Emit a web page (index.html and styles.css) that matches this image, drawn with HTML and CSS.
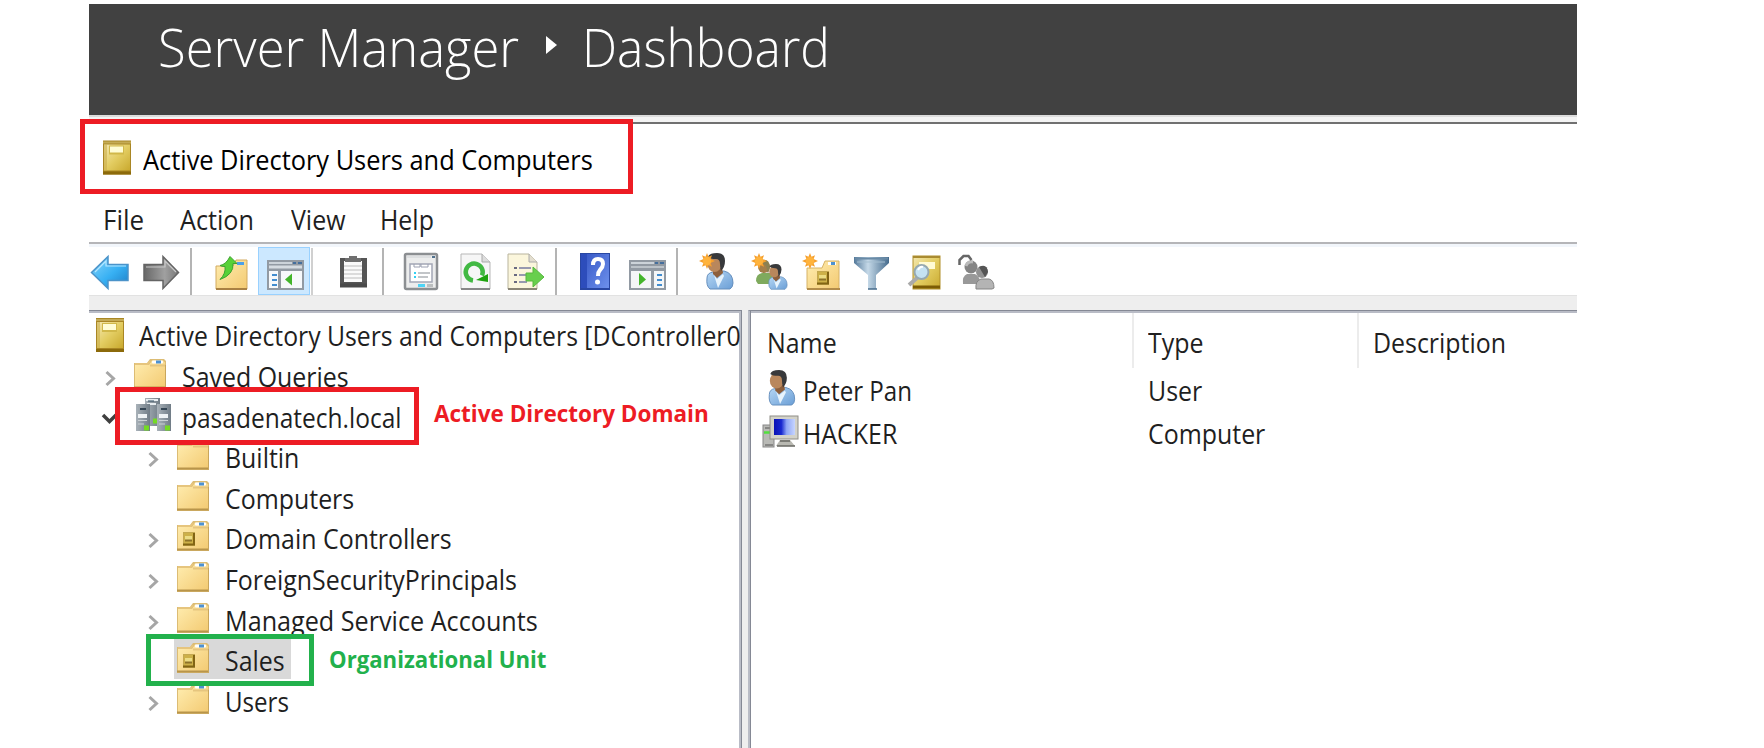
FILE: index.html
```html
<!DOCTYPE html>
<html lang="en">
<head>
<meta charset="utf-8">
<title>Active Directory Users and Computers</title>
<link rel="stylesheet" href="styles.css">
</head>
<body>
<svg class="defs" aria-hidden="true">
  <defs>
    <linearGradient id="gold" x1="0" y1="0" x2="1" y2="1"><stop offset="0" stop-color="#f3e7b0"/><stop offset=".5" stop-color="#e3cd62"/><stop offset="1" stop-color="#c9a92e"/></linearGradient>
    <linearGradient id="fold" x1="0" y1="0" x2="1" y2="1"><stop offset="0" stop-color="#ffedb0"/><stop offset="1" stop-color="#f3ca72"/></linearGradient>
    <linearGradient id="blue" x1="0" y1="0" x2="1" y2="1"><stop offset="0" stop-color="#8ad6fb"/><stop offset=".55" stop-color="#37b0f3"/><stop offset="1" stop-color="#1b7cc4"/></linearGradient>
    <linearGradient id="gray" x1="0" y1="0" x2="1" y2="0"><stop offset="0" stop-color="#676767"/><stop offset=".6" stop-color="#a0a0a0"/><stop offset="1" stop-color="#777"/></linearGradient>
    <linearGradient id="help" x1="0" y1="0" x2="1" y2="1"><stop offset="0" stop-color="#3a5bc8"/><stop offset="1" stop-color="#6d90ec"/></linearGradient>
    <linearGradient id="funnel" x1="0" y1="0" x2="1" y2="0"><stop offset="0" stop-color="#54799a"/><stop offset=".4" stop-color="#c5d9e8"/><stop offset="1" stop-color="#456b8d"/></linearGradient>
    <linearGradient id="screen" x1="0" y1="0" x2="1" y2="0"><stop offset="0" stop-color="#0a12b4"/><stop offset=".35" stop-color="#1828d0"/><stop offset=".6" stop-color="#8fa6f6"/><stop offset="1" stop-color="#c7d5ff"/></linearGradient>
    <linearGradient id="tower" x1="0" y1="0" x2="1" y2="0"><stop offset="0" stop-color="#a9b2b9"/><stop offset="1" stop-color="#707c86"/></linearGradient>
    <linearGradient id="shirt" x1="0" y1="0" x2="1" y2="1"><stop offset="0" stop-color="#b7d8f5"/><stop offset="1" stop-color="#6a9ed6"/></linearGradient>
    <symbol id="book" viewBox="0 0 28 34">
      <rect width="28" height="34" fill="#a98624"/><rect y="1" width="28" height="2" fill="#c4ab55"/>
      <rect x="1" y="4" width="26" height="26" fill="url(#gold)"/><rect x="1" y="4" width="3" height="26" fill="#c9ae4c" opacity=".6"/>
      <rect x="6" y="5" width="15" height="9" fill="#d1b849"/><rect x="7" y="6" width="13" height="6" fill="#fffdd5"/><rect y="31" width="28" height="3" fill="#8c6a0b"/>
    </symbol>
    <symbol id="folder" viewBox="0 0 33 30">
      <path d="M0 4h13l3-4h14l2 2v28H0z" fill="#dcbc74"/><path d="M1 6h14l3-4.500h11l2 2V29H1z" fill="url(#fold)"/>
      <path d="M1 5h13l2-3M16 6.500h15" stroke="#e6c57e" stroke-width="2" fill="none"/>
      <rect x="18" y="1.500" width="11" height="3" rx="1" fill="#fff"/><rect x="22" y="1.500" width="5" height="3" fill="#4d91d2"/>
      <path d="M0 28.500h32" stroke="#b8954b" stroke-width="2"/><path d="M31.500 6v23" stroke="#c9a65b"/>
    </symbol>
    <symbol id="chip" viewBox="0 0 12 14">
      <rect width="12" height="14" fill="#c4a850"/><rect x="1" y="1" width="9" height="11" fill="#cdb048"/><rect x="2" y="4" width="7" height="4" fill="#ecdc84"/><path d="M0 12.500h12M11 1v12" stroke="#826414" stroke-width="2"/><path d="M2 8.500h7" stroke="#8d7229" stroke-width="2"/>
    </symbol>
    <symbol id="spark" viewBox="0 0 16 16">
      <path d="M8 0l1.500 3.800L13 2.200l-1.400 3.900L16 8l-4.400 1.900L13 13.800l-3.500-1.600L8 16l-1.500-3.800L3 13.800l1.400-3.900L0 8l4.400-1.900L3 2.200l3.500 1.600z" fill="#f5a02f"/><circle cx="8" cy="8" r="4.200" fill="#ffb33c"/>
    </symbol>
    <symbol id="person" viewBox="0 0 28 37">
      <path d="M1 25q0-5 6-6l11-1q9 2 9 12 0 4-3 6H4q-4-3-3-11z" fill="url(#shirt)" stroke="#668fbd"/>
      <path d="M7 15h9l1 5-6 5-4-4z" fill="#8d5f3c"/><path d="M8 22l3 4 6-5 1 2-6 12z" fill="#e7f3fc"/>
      <ellipse cx="8.500" cy="11" rx="7" ry="8" fill="#b9875c"/><path d="M2 4q1-4 9-4 8 0 8 8 0 6-4 10-1-3-1-7 0-5-4-5-6 0-8-2z" fill="#38393b"/>
    </symbol>
  </defs>
</svg>

<main class="window">
  <header class="banner">
    <span class="crumb crumb-app">Server Manager</span>
    <svg class="crumb-arrow" viewBox="0 0 11 18"><path d="M0 0l11 9-11 9z" fill="#fff"/></svg>
    <span class="crumb crumb-page">Dashboard</span>
  </header>
  <div class="strip"></div>
  <div class="titlebar">
    <svg width="28" height="35"><use href="#book" width="28" height="35"/></svg>
    <span class="label title-text">Active Directory Users and Computers</span>
  </div>
  <nav class="menu">
    <span class="label m-file">File</span><span class="label m-action">Action</span><span class="label m-view">View</span><span class="label m-help">Help</span>
  </nav>

  <div class="toolbar">
    <svg width="47" height="48" viewBox="89 247 47 48"><path d="M91.500 272.500L108 256.500v8h20v16h-20v8z" fill="url(#blue)" stroke="#4b93c9" stroke-width="1.500"/><path d="M95 272l11-11v5h20" fill="none" stroke="#b3e5ff" stroke-width="1.200"/></svg>
    <svg width="54" height="48" viewBox="136 247 54 48"><path d="M178.500 272.500L163 256.500v8h-19v16h19v8z" fill="url(#gray)" stroke="#646464" stroke-width="1.500"/><path d="M146 267h19v-6l11 11" fill="none" stroke="#c8c8c8" stroke-width="1.200"/></svg>
    <span class="sep"></span>
    <svg width="66" height="48" viewBox="192 247 66 48"><path d="M216 266h17l3-6h11v29h-31z" fill="url(#fold)" stroke="#d3ab61"/><path d="M216 289h31" stroke="#a98143" stroke-width="2"/><rect x="237" y="262" width="7" height="3" fill="#4ba0ea"/><path d="M230 256.500l7 7h-4q1 11-13 16 6-6 5-13-4 0-5-1 6-1 10-9z" fill="#58d137" stroke="#3fa331"/></svg>
    <span class="tool-active"><svg width="52" height="48" viewBox="258 247 52 48"><rect x="267" y="260" width="37" height="30" fill="#929aa3"/><path d="M269 263h23" stroke="#ccd3d9" stroke-width="2"/><path d="M293 263h3M298 263h4" stroke="#456f9d" stroke-width="2"/><path d="M269 267h33" stroke="#d6dce1" stroke-width="3"/><path d="M269 271h9v17h-9zM281 271h21v17h-21z" fill="#f7f9fb"/><path d="M272 275h5M272 280h5M272 285h5" stroke="#438dcf" stroke-width="2"/><path d="M285 279.500l7-6v12z" fill="#43b52b"/></svg></span>
    <span class="gap1"></span><span class="sep sep-light"></span>
    <svg width="69" height="48" viewBox="313 247 69 48"><path d="M340 258h27v29h-27z" fill="#555"/><path d="M344 261h18v21h-18z" fill="#fafafa"/><path d="M344 266h18M344 270h18M344 274h18M344 278h18" stroke="#bcbcbc"/><path d="M345 258h4v-2h8v2h4v4h-16z" fill="#6f6f6f"/><path d="M340 285.500h27" stroke="#4a4a4a" stroke-width="4"/></svg>
    <span class="sep"></span>
    <svg width="65" height="48" viewBox="384 247 65 48"><rect x="405" y="254" width="32" height="35" rx="1.500" fill="#eceded" stroke="#8c8f92" stroke-width="2.500"/><path d="M407 257h24" stroke="#ced1d4"/><path d="M432 257h3" stroke="#51728f" stroke-width="2"/><path d="M410 264h22v18h-22z" fill="#fff" stroke="#a3a7b5" stroke-width="1.500"/><path d="M414 264v3h6v-3M421 264v3h7v-3" fill="none" stroke="#9ba0b1"/><path d="M414 273h2M414 277h2" stroke="#32d0f4" stroke-width="2"/><path d="M418 273h12M418 277h10" stroke="#868b91" stroke-width="1.200"/><path d="M418 285.500h7" stroke="#4ed4f6" stroke-width="3"/><path d="M427 285.500h6" stroke="#bbbebf" stroke-width="3"/></svg>
    <svg width="50" height="48" viewBox="449 247 50 48"><path d="M461 254h21l8 8v27h-29z" fill="#f6f6f6" stroke="#b7b7b7"/><path d="M482 254v8h8" fill="#ddd" stroke="#aaa"/><path d="M461 289h29" stroke="#888" stroke-width="2"/><path d="M473 280.500a8.500 8.500 0 1 1 9-5" fill="none" stroke="#42b943" stroke-width="4.500"/><path d="M476 280l12-6v8z" fill="#1fa30f"/></svg>
    <svg width="56" height="48" viewBox="499 247 56 48"><path d="M508 254h21l8 8v27h-29z" fill="#fbf6dc" stroke="#b9b49d"/><path d="M529 254v8h8" fill="#e3ded0" stroke="#aaa"/><path d="M508 289h29" stroke="#8a8576" stroke-width="2"/><path d="M514 268h3M514 275h3M514 282h3" stroke="#3a3c61" stroke-width="1.500"/><path d="M519 268h12M519 275h8M519 282h8" stroke="#777ba0" stroke-width="1.500"/><path d="M526 273h7v-6l11 10-11 10v-6h-7z" fill="#68cf4d" stroke="#56b83f"/></svg>
    <span class="sep"></span>
    <svg width="63" height="48" viewBox="557 247 63 48"><rect x="580" y="253" width="30" height="37" fill="#2947a3"/><rect x="581" y="254" width="6" height="34" fill="#2d4dbb"/><rect x="587" y="254" width="22" height="34" fill="url(#help)"/><path d="M593 265q0-6 5-6t5 5q0 3-3 6-2 2-2 6" fill="none" stroke="#fff" stroke-width="4"/><circle cx="597.500" cy="282" r="2.500" fill="#fff"/></svg>
    <svg width="56" height="48" viewBox="620 247 56 48"><rect x="629" y="260" width="37" height="30" fill="#929aa3"/><path d="M631 263h23" stroke="#ccd3d9" stroke-width="2"/><path d="M655 263h3M660 263h4" stroke="#456f9d" stroke-width="2"/><path d="M631 267h33" stroke="#bcc3c9" stroke-width="2"/><path d="M631 271h20v17h-20zM654 271h10v17h-10z" fill="#f4f6f7"/><path d="M657 275h5M657 280h5M657 285h5" stroke="#438dcf" stroke-width="2"/><path d="M639 273l7 6.500-7 6z" fill="#43b52b"/></svg>
    <span class="sep"></span>
    <svg width="64" height="48" viewBox="678 247 64 48"><use href="#person" x="706" y="253" width="28" height="37"/><use href="#spark" x="699" y="253" width="16" height="16"/></svg>
    <svg width="52" height="48" viewBox="742 247 52 48"><path d="M756 281q0-7 6-8h8q4 2 4 7v4h-16z" fill="#7faa5d"/><circle cx="764" cy="267" r="6" fill="#a47e4a"/><path d="M760 261q9-4 10 6l-2 7-2-8z" fill="#8b8052"/><use href="#person" x="768" y="264" width="20" height="26"/><use href="#spark" x="751" y="253" width="16" height="16"/></svg>
    <svg width="52" height="48" viewBox="794 247 52 48"><path d="M807 268h15l3-7h14v28h-32z" fill="url(#fold)" stroke="#d6b267"/><path d="M807 289h33" stroke="#b28c4a" stroke-width="2"/><rect x="828" y="262" width="8" height="3" fill="#fff"/><rect x="831" y="262" width="4" height="3" fill="#4d91d2"/><use href="#chip" x="817" y="271" width="12" height="14"/><use href="#spark" x="802" y="253" width="16" height="16"/></svg>
    <svg width="52" height="48" viewBox="846 247 52 48"><path d="M854 257h35v6l-13 12v14h-8v-14l-14-12z" fill="url(#funnel)"/><path d="M855 258.500h33" stroke="#698aa6" stroke-width="2"/><path d="M857 262h28" stroke="#a5bfd1"/><path d="M868 289h9" stroke="#466b8b" stroke-width="1.500"/></svg>
    <svg width="52" height="48" viewBox="898 247 52 48"><rect x="913" y="256" width="27" height="33" fill="url(#gold)" stroke="#b2902b"/><rect x="919" y="262" width="16" height="7" fill="#fffbd5"/><path d="M913 257h27" stroke="#a98b31" stroke-width="2"/><path d="M913 287h27" stroke="#7c5c05" stroke-width="3"/><path d="M917 278l-8 7" stroke="#aaa" stroke-width="4"/><circle cx="921.500" cy="272" r="7" fill="#c5e2f2" stroke="#96a8b0" stroke-width="2"/><path d="M918 270q2-4 5-3" stroke="#fff" stroke-width="2" fill="none"/></svg>
    <svg width="52" height="48" viewBox="950 247 52 48"><path d="M963 284q-1-8 4-10h8q5 2 5 10z" fill="#999"/><circle cx="971" cy="267" r="6.500" fill="#848484"/><path d="M966 266q2-5 7-4" stroke="#bbb" stroke-width="3" fill="none"/><path d="M976 289q-1-8 5-10h8q5 1 5 9l-2 1z" fill="#b4b4b4" stroke="#858585"/><circle cx="982" cy="272" r="6" fill="#929292"/><path d="M979 267q8-4 9 5l-3 5z" fill="#555"/><path d="M959.500 265v-5l4-4h5l3 4" fill="none" stroke="#666" stroke-width="2.500"/></svg>
  </div>
  <div class="band"></div>

  <div class="panes">
    <section class="tree">
      <div class="row"><svg width="50" height="40" viewBox="0 0 50 40"><use href="#book" x="7" y="4" width="28" height="34"/></svg><span class="label root-text">Active Directory Users and Computers [DController0</span></div>
      <div class="row"><svg width="41" height="40" viewBox="0 0 41 40"><path d="M17.500 17l7 6.500-7 6.500" class="chev"/></svg><svg width="53" height="40" viewBox="0 0 53 40"><use href="#folder" x="4" y="4" width="33" height="30"/></svg><span class="label">Saved Queries</span></div>
      <div class="row"><svg width="41" height="40" viewBox="0 0 41 40"><path d="M14 19l6.500 6.500L27 19" class="chev open"/></svg><svg width="53" height="40" viewBox="0 0 53 40">
        <rect x="15" y="2" width="15" height="28" fill="url(#tower)"/><path d="M16 4h12M17 8h9" stroke="#e8edf0" stroke-width="2"/><path d="M18 5h6" stroke="#334f62"/>
        <rect x="6" y="8" width="14" height="27" fill="url(#tower)"/><rect x="27" y="8" width="14" height="27" fill="url(#tower)"/><path d="M10 13h6M31 13h6" stroke="#354655" stroke-width="2"/><path d="M8 20h9M29 20h9" stroke="#eef2f4" stroke-width="4"/><path d="M8 24.500h9M29 24.500h9M8 28h6M29 28h6" stroke="#cad0d4"/><path d="M14 32h5M35 32h5M23 25h4" stroke="#74db23" stroke-width="5"/></svg><span class="label domain-text">pasadenatech.local</span></div>
      <div class="row deep"><svg width="41" height="40" viewBox="0 0 41 40"><path d="M17.500 17l7 6.500-7 6.500" class="chev"/></svg><svg width="53" height="40" viewBox="0 0 53 40"><use href="#folder" x="4" y="4" width="33" height="30"/></svg><span class="label">Builtin</span></div>
      <div class="row deep"><span class="nochev"></span><svg width="53" height="40" viewBox="0 0 53 40"><use href="#folder" x="4" y="4" width="33" height="30"/></svg><span class="label">Computers</span></div>
      <div class="row deep"><svg width="41" height="40" viewBox="0 0 41 40"><path d="M17.500 17l7 6.500-7 6.500" class="chev"/></svg><svg width="53" height="40" viewBox="0 0 53 40"><use href="#folder" x="4" y="4" width="33" height="30"/><use href="#chip" x="10" y="15" width="12" height="14"/></svg><span class="label">Domain Controllers</span></div>
      <div class="row deep"><svg width="41" height="40" viewBox="0 0 41 40"><path d="M17.500 17l7 6.500-7 6.500" class="chev"/></svg><svg width="53" height="40" viewBox="0 0 53 40"><use href="#folder" x="4" y="4" width="33" height="30"/></svg><span class="label">ForeignSecurityPrincipals</span></div>
      <div class="row deep"><svg width="41" height="40" viewBox="0 0 41 40"><path d="M17.500 17l7 6.500-7 6.500" class="chev"/></svg><svg width="53" height="40" viewBox="0 0 53 40"><use href="#folder" x="4" y="4" width="33" height="30"/></svg><span class="label accounts-text">Managed Service Accounts</span></div>
      <div class="row deep"><span class="nochev"></span><span class="picked"><svg width="53" height="40" viewBox="0 0 53 40"><use href="#folder" x="4" y="4" width="33" height="30"/><use href="#chip" x="10" y="15" width="12" height="14"/></svg><span class="label">Sales</span></span></div>
      <div class="row deep"><svg width="41" height="40" viewBox="0 0 41 40"><path d="M17.500 17l7 6.500-7 6.500" class="chev"/></svg><svg width="53" height="40" viewBox="0 0 53 40"><use href="#folder" x="4" y="4" width="33" height="30"/></svg><span class="label users-text">Users</span></div>
    </section>
    <div class="splitter"></div>
    <section class="list">
      <div class="cols head"><div class="cell first"><span class="label">Name</span></div><div class="cell"><span class="label">Type</span></div><div class="cell last"><span class="label">Description</span></div></div>
      <div class="cols item"><div class="cell named"><svg width="50" height="43" viewBox="0 0 50 43"><use href="#person" x="17" y="2" width="28" height="36"/></svg><span class="label peter-text">Peter Pan</span></div><div class="cell"><span class="label">User</span></div><div></div></div>
      <div class="cols item"><div class="cell named"><svg width="50" height="43" viewBox="-1 -1 50 43"><rect x="11" y="13" width="11" height="22" fill="#b9bab6" stroke="#888"/><path d="M13 16h6M13 33h8" stroke="#555"/><path d="M12 20.500h7" stroke="#52e13d" stroke-width="2.500"/><rect x="18" y="4" width="28" height="23" fill="#d3d2c9" stroke="#8f8e87"/><rect x="22" y="7" width="21" height="16" fill="url(#screen)"/><path d="M28 28h10l5 6H24z" fill="#b8b8b1"/><path d="M28 29h10M25 34h18" stroke="#686863" stroke-width="1.500"/></svg><span class="label">HACKER</span></div><div class="cell"><span class="label">Computer</span></div><div></div></div>
    </section>
  </div>
</main>

<div class="box box-title"></div>
<div class="box box-domain"></div>
<div class="box box-unit"></div>
<span class="note note-domain">Active Directory Domain</span>
<span class="note note-unit">Organizational Unit</span>
</body>
</html>
```
FILE: styles.css
```css
* { box-sizing: border-box; }
body {
  margin: 0;
  width: 1764px;
  height: 748px;
  overflow: hidden;
  position: relative;
  background: #fff;
  color: #1f1f1f;
  font: 26.5px "Open Sans", "Noto Sans", sans-serif;
}
svg { display: block; flex: none; }
.defs { position: absolute; width: 0; height: 0; }
.window { width: 1488px; height: 748px; margin-left: 89px; padding-top: 4px; overflow: hidden; }

.label { display: inline-block; white-space: nowrap; transform: scaleX(.94); transform-origin: 0 50%; }

.banner { height: 111px; background: #414141; color: #fff; display: flex; align-items: flex-start; padding-left: 69px; }
.crumb { font-size: 54px; font-weight: 300; line-height: 85px; white-space: nowrap; transform: scaleX(.94); transform-origin: 0 50%; }
.crumb-app { width: 388px; }
.crumb-arrow { width: 11px; height: 18px; margin-top: 32px; }
.crumb-page { margin-left: 25px; transform: scaleX(.92); }
.strip { height: 9px; background: #f3f3f3; border-top: 2px solid #dcdcdc; border-bottom: 2px solid #707070; }

.titlebar { height: 70px; display: flex; align-items: flex-start; padding: 16px 0 0 14px; }
.title-text { color: #000; margin-left: 12px; line-height: 40px; transform: scaleX(.957); }

.menu { height: 48px; display: flex; line-height: 52px; padding-left: 14px; }
.m-file { width: 77px; transform: scaleX(.98); }
.m-action { width: 111px; transform: scaleX(.95); }
.m-view { width: 89px; }

.toolbar { height: 53px; border-top: 2px solid #b5b5b8; box-shadow: inset 0 3px #f2f6fb; padding-top: 3px; display: flex; }
.sep { width: 2px; height: 47px; margin-top: 1px; background: #b4b4b4; flex: none; }
.sep-light { background: #d0d0d0; }
.gap1 { width: 1px; flex: none; }
.tool-active { background: #cce8ff; outline: 1px solid #99d1ff; outline-offset: -1px; flex: none; }

.band { height: 15px; background: #eee; border-top: 1px solid #e2e2e2; }
.panes { height: 440px; display: flex; background: #eee; }
.tree {
  width: 653px; flex: none; overflow: hidden; background: #fff; padding-top: 3.400px;
  border-top: 1px solid #858995; border-right: 1px solid #858995;
  box-shadow: inset -2px 2px #b9bcc6;
}
.splitter { width: 6px; flex: none; }
.list { flex: 1; background: #fff; padding-top: 2px; border-top: 1px solid #858995; border-left: 2px solid #b9bcc6; box-shadow: inset 1px 0 #858995, inset 0 2px #b9bcc6; padding-left: 1px; }

.row { height: 40.600px; display: flex; white-space: nowrap; }
.row .label { line-height: 44.600px; margin-left: -1px; }
.row .root-text { margin-left: 0; transform: scaleX(.934); }
.row .domain-text { transform: scaleX(.925); }
.row .accounts-text { transform: scaleX(.95); }
.row .users-text { transform: scaleX(.91); }
.deep { padding-left: 42.500px; }
.nochev { width: 41px; flex: none; }
.chev { fill: none; stroke: #a6a6a6; stroke-width: 3; }
.chev.open { stroke: #404040; stroke-width: 3.500; }
.picked { display: flex; width: 118px; height: 40px; background: linear-gradient(#d9d9d9, #d9d9d9) 1px 0 no-repeat; }

.cols { display: grid; grid-template-columns: 383px 225px 1fr; }
.head { height: 55px; grid-template-rows: 55px; line-height: 60px; }
.item { height: 43px; grid-template-rows: 43px; line-height: 46px; }
.cell { padding-left: 14px; white-space: nowrap; }
.head .cell { border-right: 2px solid #ececec; }
.head .cell.last { border: 0; }
.cell.first { padding-left: 16px; }
.cell.named { display: flex; padding-left: 0; }
.item .named svg { margin-right: 2px; }
.peter-text { transform: scaleX(.91); }

.box { position: absolute; border: 5px solid #ed1c24; }
.box-title { left: 80px; top: 119px; width: 553px; height: 75px; }
.box-domain { left: 115px; top: 387px; width: 304px; height: 58px; }
.box-unit { left: 146px; top: 634px; width: 168px; height: 52px; border-color: #22b14c; }
.note { position: absolute; font-size: 22.500px; font-weight: 700; line-height: 30px; white-space: nowrap; transform-origin: 0 50%; }
.note-domain { left: 434px; top: 399px; color: #ed1c24; }
.note-unit { left: 329px; top: 645px; color: #22b14c; transform: scaleX(.985); }
```
